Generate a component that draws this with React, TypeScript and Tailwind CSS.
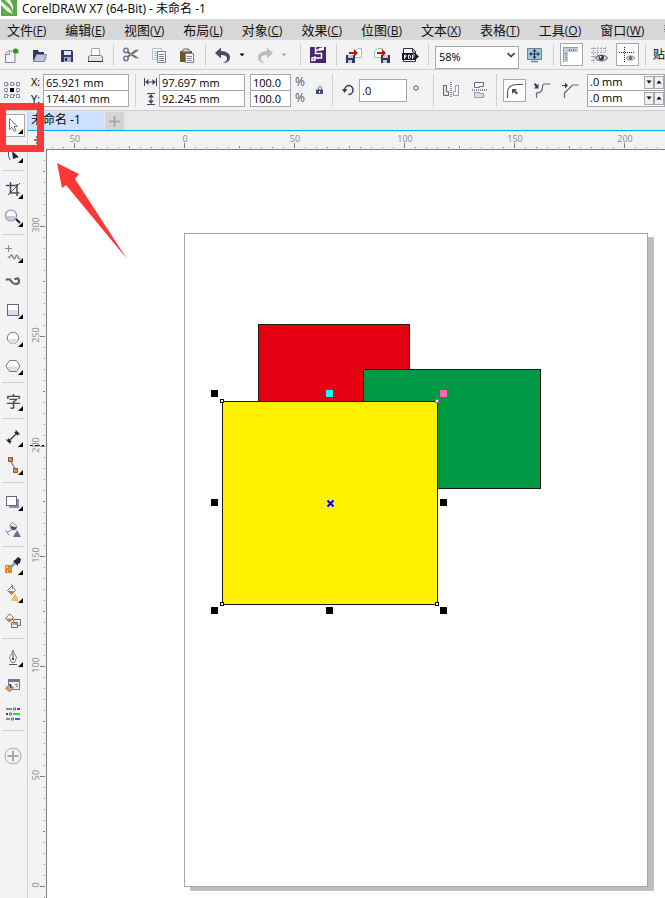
import React, { useEffect, useState } from 'react';

const MENUS = [
  ['文件', 'F'],
  ['编辑', 'E'],
  ['视图', 'V'],
  ['布局', 'L'],
  ['对象', 'C'],
  ['效果', 'C'],
  ['位图', 'B'],
  ['文本', 'X'],
  ['表格', 'T'],
  ['工具', 'O'],
  ['窗口', 'W'],
  ['帮助', 'H'],
];

type Children = { children?: React.ReactNode };

const useWindowSize = () => {
  const [size, setSize] = useState({ width: window.innerWidth, height: window.innerHeight });

  useEffect(() => {
    const update = () => setSize({ width: window.innerWidth, height: window.innerHeight });
    window.addEventListener('resize', update);
    return () => window.removeEventListener('resize', update);
  }, []);

  return size;
};

/* ---------- Small building blocks ---------- */

const Sep = () => <span className="ml-1 mr-[3px] h-[22px] w-px shrink-0 bg-[#d0d0d0]" />;

const BarButton = ({ label, active, children }: Children & { label: string; active?: boolean }) => (
  <button type="button" aria-label={label} className="flex h-7 w-7 shrink-0 items-center justify-center">
    <span
      className={
        active
          ? 'flex h-[23px] w-[23px] items-center justify-center border border-[#a6a8ad] bg-white'
          : 'flex h-[23px] w-[23px] items-center justify-center'
      }
    >
      <svg viewBox="0 0 20 20" className="h-5 w-5 shrink-0" fill="none">
        {children}
      </svg>
    </span>
  </button>
);

const Caret = ({ label, color }: { label: string; color: string }) => (
  <button type="button" aria-label={label} className="flex h-7 w-[14px] shrink-0 items-center pl-[2px]">
    <svg viewBox="0 0 6 4" className="h-1 w-1.5">
      <path d="M0.5 0.5h5L3 3.200z" fill={color} />
    </svg>
  </button>
);

const PropSep = () => <span className="h-[33px] w-px shrink-0 bg-[#d0d0d0]" />;

const Field = ({ label, value, className }: { label: string; value: string; className: string }) => (
  <input
    aria-label={label}
    defaultValue={value}
    className={`border border-[#a6a8ad] bg-white px-[2px] text-[11px] text-black outline-none ${className}`}
  />
);

const Tool = ({ label, flyout, active, children }: Children & { label: string; flyout?: boolean; active?: boolean }) => (
  <button type="button" aria-label={label} className="block h-7 w-[27px] shrink-0">
    <svg viewBox="0 0 27 28" className="h-7 w-[27px]" fill="none">
      {active && <rect x="5.5" y="3.5" width="19" height="22" fill="#fff" stroke="#a6a8ad" />}
      {children}
      {flyout && <path d="M23 18v5h-5z" fill="#000" />}
    </svg>
  </button>
);

const ToolSep = () => <span className="mb-[5px] ml-0.5 mt-[2px] block h-px w-[22px] shrink-0 bg-[#d0d0d0]" />;

/* ---------- Top rows ---------- */

const TitleBar = () => (
  <header className="flex h-[19px] shrink-0 items-start gap-[5px] overflow-hidden bg-white pl-px">
    <svg viewBox="0 0 16 16" className="h-4 w-4 shrink-0">
      <rect width="16" height="16" fill="#5cab46" />
      <path d="M0 1l9 8 3 5-5-2L0 5zM4 0l6 6 2 5V6L9 0z" fill="#fff" />
      <path d="M1 2l11 12M5 0l6 8" stroke="#8bc47c" strokeWidth="0.6" />
    </svg>
    <h1 className="whitespace-nowrap text-xs leading-[17px] text-black">CorelDRAW X7 (64-Bit) - 未命名 -1</h1>
  </header>
);

const MenuBar = () => (
  <nav className="flex h-[21px] shrink-0 items-center gap-[19px] overflow-hidden bg-[#d7d7d7] pl-[7px]">
    {MENUS.map(([name, key]) => (
      <button type="button" key={name} className="shrink-0 whitespace-nowrap text-[13px] leading-5 text-[#111]">
        {name}
        <span className="text-xs">
          (<u>{key}</u>)
        </span>
      </button>
    ))}
  </nav>
);

const StandardBar = () => (
  <div className="flex h-[30px] shrink-0 items-center overflow-hidden border-b border-[#d0d0d0] bg-[#f3f3f3]">
    <div className="-ml-[3px] flex shrink-0 items-center">
      <BarButton label="新建">
        <path d="M4.500 8.500l3-2.500h6.500v11.500H4.500z" fill="#f4f4f8" stroke="#84849a" />
        <path d="M4.500 9.500h4V6.500" stroke="#84849a" />
        <path d="M12 4l2 1 1-2 1 2 2 0-1 2 1 2-2-1-1 1-1-1-2 0 1-2z" fill="#3f9c22" />
        <circle cx="14.5" cy="6" r="2.4" fill="#2f9416" />
      </BarButton>
      <BarButton label="打开">
        <path d="M4 16V5h5l1 2h5v3H8z" fill="#333657" />
        <path d="M4.500 16.500l3-7h10l-2 7z" fill="#c3c6d8" stroke="#7b7e98" />
      </BarButton>
      <BarButton label="保存">
        <path d="M4 5h11l1 1.500V17H4z" fill="#34386a" />
        <path d="M7 6h7v4H7z" fill="#dfe3f2" />
        <path d="M7 12h7v5H7z" fill="#a9aed0" />
        <path d="M8 13h2v3H8z" fill="#22254c" />
      </BarButton>
      <BarButton label="打印">
        <path d="M6.500 3.500h8v8h-8z" fill="#fff" stroke="#86b5ba" />
        <path d="M3.500 11.500l2-1h10l2 1v5h-14z" fill="#e3e4d2" stroke="#77788c" />
        <path d="M6 11.500h9" stroke="#fff" />
        <path d="M3 16.500h15" stroke="#23243a" />
      </BarButton>
      <Sep />
      <BarButton label="剪切">
        <circle cx="5" cy="5.500" r="2.200" stroke="#72728c" strokeWidth="1.500" />
        <circle cx="5" cy="13.500" r="2.200" stroke="#72728c" strokeWidth="1.500" />
        <path d="M7 6.500l10.500 6.500h-3L6.500 8zM7 12.500L17.500 5h-3L6.500 11z" fill="#66665f" stroke="#66665f" strokeWidth="0.400" />
      </BarButton>
      <BarButton label="复制">
        <path d="M3.500 3.500h9v11h-9z" fill="#fff" stroke="#a5c5c7" />
        <path d="M5 6.500h5M5 8.500h3M5 10.500h3M5 12.500h3" stroke="#a5c5c7" />
        <path d="M8.500 6.500h8v11h-8z" fill="#fff" stroke="#7b7e98" />
        <path d="M10 9.500h5M10 11.500h5M10 13.500h5M10 15.500h5" stroke="#7b7e98" />
      </BarButton>
      <BarButton label="粘贴">
        <path d="M3 6h12v11H3z" fill="#6e5434" />
        <path d="M5 7l1.500-3h5L13 7z" fill="#d8d4b8" stroke="#66685f" />
        <path d="M8.500 8.500h8v9h-8z" fill="#f5f7fd" stroke="#7b7e98" />
        <path d="M10 11.500h5M10 13.500h5M10 15.500h5" stroke="#8a8fb4" />
      </BarButton>
      <Sep />
      <BarButton label="撤消">
        <path d="M2 8l6-5.500V6c6 0 9 3 9 6.500S14 18 10 18c3-1 4-3 4-4.500 0-2.500-2.500-3.500-6-3.500v3.500z" fill="#4c4c66" />
      </BarButton>
      <Caret label="撤消列表" color="#000" />
      <BarButton label="重做">
        <path d="M18 8l-6-5.500V6c-6 0-9 3-9 6.500S6 18 10 18c-3-1-4-3-4-4.500 0-2.500 2.500-3.500 6-3.500v3.500z" fill="#bdbdbf" />
      </BarButton>
      <Caret label="重做列表" color="#a5a5a5" />
      <span className="w-[3px] shrink-0" />
      <Sep />
      <BarButton label="搜索内容">
        <path d="M2 2h16v16H2z" fill="#4a2570" />
        <path d="M7.500 2v6.500h6V13H6M13.500 3.500L8 5.500M4 15.500V13l3-1v3z" stroke="#fff" strokeWidth="1.500" />
        <path d="M11 3l5-1v3l-5 1z" fill="#fff" />
      </BarButton>
      <Sep />
      <BarButton label="导入">
        <path d="M10.500 6.500l3-3h4v9h-7z" fill="#fff" stroke="#9cbcbf" />
        <path d="M2 10h9v8H2z" fill="#34375b" />
        <path d="M4 10h5v3H4zM4 15h4v3H4z" fill="#c5cadf" />
        <path d="M5 7h5V4l4 4-4 4V9H5z" fill="#c4180c" />
      </BarButton>
      <BarButton label="导出">
        <path d="M2.500 6.500l3-3h5v9h-8z" fill="#fff" stroke="#9cbcbf" />
        <path d="M9 10h9v8H9z" fill="#34375b" />
        <path d="M11 10h5v3h-5zM11 15h4v3h-4z" fill="#c5cadf" />
        <path d="M5 7h5V4l4 4-4 4V9H5z" fill="#c4180c" />
      </BarButton>
      <BarButton label="发布为 PDF">
        <path d="M3.500 3.500h9l3 3v10h-12z" fill="#fff" stroke="#2d2f45" />
        <path d="M12.500 3v4h3" stroke="#2d2f45" />
        <path d="M2 8h13l4 3.500-4 3.500H2z" fill="#15162c" />
        <path d="M4.500 14v-4h1.500v2H4.500M8.500 10v3.500h1l1-1v-1.500l-1-1zM12.500 14v-4H15M12.500 12h2" stroke="#fff" strokeWidth="0.900" />
      </BarButton>
      <Sep />
      <span className="relative ml-[3px] mr-px block h-[23px] w-[84px] shrink-0">
        <select
          aria-label="缩放级别"
          defaultValue="58%"
          className="h-full w-full appearance-none border border-[#a6a8ad] bg-white pl-[3px] text-[11px] text-black outline-none"
        >
          <option>58%</option>
          <option>100%</option>
          <option>200%</option>
        </select>
        <svg viewBox="0 0 8 6" className="pointer-events-none absolute right-1 top-[9px] h-1.5 w-2" fill="none">
          <path d="M0.500 1L4 4.500 7.500 1" stroke="#444" strokeWidth="1.700" />
        </svg>
      </span>
      <BarButton label="全屏预览">
        <path d="M3.500 3.500h14v11h-14z" fill="#8fcbd9" stroke="#7a7d92" />
        <path d="M7 16.500h7" stroke="#7a7d92" strokeWidth="1.500" />
        <path d="M10.500 5v8M6 9h9" stroke="#26284d" />
        <path d="M10.500 4l2 2.500h-4zM10.500 14l2-2.500h-4zM5 9l2.500-2v4zM16 9l-2.500-2v4z" fill="#26284d" />
      </BarButton>
      <span className="w-px shrink-0" />
      <Sep />
      <BarButton label="显示标尺" active>
        <path d="M2 2h15v5H7v10H2z" fill="#c3cad9" />
        <path d="M2 2h15v1H3v14H2z" fill="#949db3" />
        <path d="M8.500 4v2M10.500 5v1M12.500 4v2M14.500 5v1M4 8.500h2M5 10.500h1M4 12.500h2M5 14.500h1" stroke="#6f7892" />
      </BarButton>
      <BarButton label="显示网格">
        <path d="M2 3.500h15M2 7.500h15M2 11.500h6M2 15.500h4M4.500 2v16M8.500 2v9M12.500 2v6M16.500 2v6" stroke="#a6a9be" strokeDasharray="2 1" />
        <path d="M6.500 13C9.500 9 15.500 9 18.500 13c-3 4-9 4-12 0z" fill="#e8e8ec" stroke="#77777f" strokeWidth="1.200" />
        <circle cx="12.300" cy="12.800" r="2.800" fill="#3f3f4c" />
        <circle cx="11.600" cy="12" r="0.900" fill="#fff" />
      </BarButton>
      <BarButton label="显示辅助线" active>
        <path d="M2 7.500h16M7.500 2v15" stroke="#22243c" strokeDasharray="1 1" />
        <path d="M9 13c2.500-3 6.500-3 9 0-2.500 3-6.500 3-9 0z" fill="#e8e8ec" stroke="#9a9aa4" />
        <circle cx="13.500" cy="13" r="2" fill="#6c6c78" />
      </BarButton>
      <Sep />
      <button type="button" className="ml-1 whitespace-nowrap text-xs text-black">
        贴齐
      </button>
    </div>
  </div>
);

const Spinner = ({ label, className }: { label: string; className: string }) => (
  <div className={`flex h-[17px] items-center border border-[#a6a8ad] bg-white ${className}`}>
    <input aria-label={label} defaultValue=".0 mm" className="w-14 bg-transparent pl-[2px] text-[11px] text-black outline-none" />
    <button type="button" aria-label={`${label}减小`} className="flex h-[13px] w-[10px] items-center justify-center border border-[#a6a8ad] bg-[#f0f0f0]">
      <svg viewBox="0 0 6 4" className="h-1 w-1.5 shrink-0">
        <path d="M0.500 0.500h5L3 3.500z" />
      </svg>
    </button>
    <button type="button" aria-label={`${label}增大`} className="flex h-[13px] w-[10px] items-center justify-center border border-[#a6a8ad] bg-[#f0f0f0]">
      <svg viewBox="0 0 6 4" className="h-1 w-1.5 shrink-0">
        <path d="M0.500 3.500h5L3 0.500z" />
      </svg>
    </button>
  </div>
);

const PropertyBar = () => (
  <div className="flex h-[41px] shrink-0 items-center overflow-hidden border-b border-[#d0d0d0] bg-[#f3f3f3] pl-1 text-[11px]">
    <button type="button" aria-label="对象原点" className="shrink-0">
      <svg viewBox="0 0 16 16" className="h-4 w-4" fill="none">
        <path d="M2 2.500h12M2 13.500h12M2.500 2v12M13.500 2v12" stroke="#8888a0" strokeDasharray="1 1" />
        <path
          d="M.5.500h3v3h-3zM6.500.500h3v3h-3zM12.500.500h3v3h-3zM.5 6.500h3v3h-3zM12.500 6.500h3v3h-3zM.5 12.500h3v3h-3zM6.500 12.500h3v3h-3zM12.500 12.500h3v3h-3z"
          fill="#f3f3f3"
          stroke="#8a8aa0"
        />
        <path d="M6 6h4v4H6z" fill="#000" />
      </svg>
    </button>
    <div className="ml-[11px] grid shrink-0 grid-cols-[12px_86px] leading-4">
      <span>X:</span>
      <Field label="X" value="65.921 mm" className="h-[17px]" />
      <span>Y:</span>
      <Field label="Y" value="174.401 mm" className="-mt-px h-[17px]" />
    </div>
    <span className="w-1.5 shrink-0" />
    <PropSep />
    <div className="ml-2 grid shrink-0 grid-cols-[15px_86px] items-center">
      <svg viewBox="0 0 13 10" className="h-2.5 w-[13px]" fill="none">
        <path d="M.5 1v8M12.500 1v8M2 5h9" stroke="#44455c" />
        <path d="M1 5l3.500-3v6zM12 5L8.500 2v6z" fill="#44455c" />
      </svg>
      <Field label="对象宽度" value="97.697 mm" className="h-[17px]" />
      <svg viewBox="0 0 13 12" className="h-3 w-[13px]" fill="none">
        <path d="M3 .5h8M3 11.500h8M7 2v8" stroke="#44455c" />
        <path d="M7 1l3 3.500H4zM7 11l3-3.500H4z" fill="#44455c" />
      </svg>
      <Field label="对象高度" value="92.245 mm" className="-mt-px h-[17px]" />
    </div>
    <div className="ml-[5px] flex w-[41px] shrink-0 flex-col">
      <Field label="水平缩放" value="100.0" className="h-[17px]" />
      <Field label="垂直缩放" value="100.0" className="-mt-px h-[17px]" />
    </div>
    <div className="ml-1 w-5 shrink-0 text-xs leading-4 text-[#555566]">
      <p>%</p>
      <p>%</p>
    </div>
    <button type="button" aria-label="锁定比率" className="shrink-0">
      <svg viewBox="0 0 9 10" className="h-2.5 w-[9px]" fill="none">
        <path d="M3.500 5V3Q3.500 1.500 5 1.500T6.500 3V5" stroke="#77778c" />
        <path d="M1 4.500h7V9H1z" fill="#4a4b6c" />
        <path d="M4 6h1v2H4z" fill="#fff" />
      </svg>
    </button>
    <span className="w-2 shrink-0" />
    <PropSep />
    <div className="ml-[9px] flex shrink-0 items-center">
      <svg viewBox="0 0 12 12" className="h-3 w-3" fill="none">
        <path d="M2.500 6.500C2.500 3 5 1.500 7 1.500S11 3.500 11 6s-2 4.500-4.500 4.500" stroke="#3b3c54" strokeWidth="1.500" />
        <path d="M0 5h5.500L2.500 9z" fill="#3b3c54" />
      </svg>
      <Field label="旋转角度" value=".0" className="ml-[5px] h-[23px] w-[48px]" />
      <svg viewBox="0 0 6 6" className="mb-1 ml-1.5 h-1.5 w-1.5" fill="none">
        <circle cx="3" cy="3" r="2.200" stroke="#555566" />
      </svg>
    </div>
    <span className="w-[14px] shrink-0" />
    <PropSep />
    <div className="ml-[9px] flex shrink-0 gap-[13px]">
      <button type="button" aria-label="水平镜像">
        <svg viewBox="0 0 16 16" className="h-4 w-4" fill="none">
          <path d="M.5 3.500h3v6h2v4h-5z" fill="#e0e0e8" stroke="#66667e" />
          <path d="M15.500 3.500h-3v6h-2v4h5z" fill="#f8f8fa" stroke="#9a9aac" />
          <path d="M8 0v16" stroke="#22233c" strokeDasharray="1 1" />
        </svg>
      </button>
      <button type="button" aria-label="垂直镜像">
        <svg viewBox="0 0 16 16" className="h-4 w-4" fill="none">
          <path d="M2.500.500h9v4h-4v1h-5z" fill="#f8f8fa" stroke="#66667e" />
          <path d="M2.500 15.500h9v-4h-4v-1h-5z" fill="#e0e0e8" stroke="#9a9aac" />
          <path d="M0 8h16" stroke="#22233c" strokeDasharray="1 1" />
        </svg>
      </button>
    </div>
    <span className="w-2 shrink-0" />
    <PropSep />
    <button type="button" aria-label="圆角" className="ml-1.5 flex h-[23px] w-[23px] shrink-0 items-center justify-center border border-[#a6a8ad] bg-white">
      <svg viewBox="0 0 19 19" className="h-[19px] w-[19px]" fill="none">
        <path d="M2.500 17v-5Q2.500 3.500 12 3.500h6" stroke="#55566c" strokeWidth="1.200" />
        <path d="M7 8h5l-1.500 1.500 2.500 2.500-1.500 1.500-2.500-2.500L7 13z" fill="#4b4c64" />
      </svg>
    </button>
    <button type="button" aria-label="扇形角" className="ml-[7px] shrink-0">
      <svg viewBox="0 0 18 18" className="h-[18px] w-[18px]" fill="none">
        <path d="M3.500 17v-5q6 0 6-6 0-3 2-3h6" stroke="#66677c" strokeWidth="1.200" />
        <path d="M1 3l1-1 2.500 2 1-1.500V7.500H1l1.500-1.500z" fill="#3b3c54" />
      </svg>
    </button>
    <button type="button" aria-label="倒棱角" className="ml-2.5 shrink-0">
      <svg viewBox="0 0 18 18" className="h-[18px] w-[18px]" fill="none">
        <path d="M3.500 17v-5l8-8h6" stroke="#66677c" strokeWidth="1.200" />
        <path d="M1 4h3V1.500L7 4.500l-3 3V5H1z" fill="#3b3c54" />
      </svg>
    </button>
    <div className="ml-2 flex shrink-0 flex-col">
      <Spinner label="左侧圆角半径" className="" />
      <Spinner label="右侧圆角半径" className="-mt-px" />
    </div>
  </div>
);

/* ---------- Toolbox ---------- */

const Toolbox = () => (
  <aside className="flex w-7 shrink-0 flex-col border-r border-[#d0d0d0] bg-[#f3f3f3]">
    <Tool label="选择工具" active flyout>
      <path d="M9.500 7.500v11l2.500-2.200 2 4.200 2-1-2-4h3.300z" fill="#fff" stroke="#77778c" />
    </Tool>
    <span className="h-px shrink-0" />
    <Tool label="形状工具" flyout>
      <path d="M8.500 11v4q0 3 2 5" stroke="#55566c" />
      <path d="M7 9h4v3H7z" fill="#77788c" />
      <path d="M12 11l7 6-6 2z" fill="#22233c" />
    </Tool>
    <ToolSep />
    <Tool label="裁剪工具" flyout>
      <path d="M6 9.500h11V20M10.500 6v11h9M17 8v3" stroke="#4b4c64" strokeWidth="1.500" />
      <path d="M8 19L20 7" stroke="#4b4c64" />
    </Tool>
    <Tool label="缩放工具" flyout>
      <path d="M16 15l4 4" stroke="#22233c" strokeWidth="2.200" />
      <circle cx="11" cy="11.500" r="5.500" fill="#fff" stroke="#88889c" strokeWidth="1.200" />
      <path d="M6.500 12h9a4.500 4.500 0 01-9 0z" fill="#c9cbdd" />
    </Tool>
    <ToolSep />
    <Tool label="手绘工具" flyout>
      <path d="M8.500 5v7M5 8.500h7" stroke="#8a8a9e" />
      <path d="M8 16.500q1.500 2 2.500-.5t2.500 1 2.500 0 2.500 0 2 1" stroke="#88899e" strokeWidth="1.500" />
    </Tool>
    <Tool label="艺术笔工具">
      <path d="M6 12q3-2 5 1t5 3 3-3-2-2.500-2.500 1" stroke="#5c5c70" strokeWidth="2.200" />
      <path d="M6 10.500h5" stroke="#9999ac" />
    </Tool>
    <Tool label="矩形工具" flyout>
      <rect x="7.500" y="8.500" width="11" height="11" fill="#fff" stroke="#66677c" />
      <path d="M8 14h10v5H8z" fill="#dcdde9" />
    </Tool>
    <Tool label="椭圆形工具" flyout>
      <circle cx="13" cy="14" r="5.700" fill="#fff" stroke="#77778c" />
      <path d="M8 15h10a5 5 0 01-10 0z" fill="#dcdde9" />
    </Tool>
    <Tool label="多边形工具" flyout>
      <path d="M9.500 8.500h7l3.500 5.500-3.500 5.500h-7L6 14z" fill="#fff" stroke="#77778c" />
      <path d="M7 14.500h12L16.200 19H9.800z" fill="#dcdde9" />
    </Tool>
    <ToolSep />
    <button type="button" aria-label="文本工具" className="relative flex h-7 w-[27px] shrink-0 items-center justify-center pb-0.5 text-[15px] font-medium leading-5 text-[#4c4c62]">
      字
      <svg viewBox="0 0 5 5" className="absolute bottom-[5px] right-1 h-[5px] w-[5px]">
        <path d="M5 0v5H0z" />
      </svg>
    </button>
    <ToolSep />
    <Tool label="平行度量工具" flyout>
      <path d="M9 17l8-8M6.500 15.500l4 4M15.500 6.500l4 4" stroke="#33344c" strokeWidth="1.200" />
      <path d="M8 18v-4l4 4zM18 8v4l-4-4z" fill="#22233c" />
    </Tool>
    <Tool label="直线连接器" flyout>
      <path d="M11 10l5 8" stroke="#77778c" strokeWidth="1.200" />
      <rect x="8.500" y="5.500" width="4" height="4" fill="#f98a10" stroke="#8a5a55" />
      <rect x="13.500" y="16.500" width="4" height="4" fill="#f98a10" stroke="#8a5a55" />
    </Tool>
    <ToolSep />
    <Tool label="阴影工具" flyout>
      <path d="M9 11h10v9H9z" fill="#8c8eaa" />
      <rect x="6.500" y="8.500" width="10" height="9" fill="#fff" stroke="#66677c" />
    </Tool>
    <Tool label="透明度工具">
      <path d="M12.500 6.500l4.500 4q-1 3.500-4 3.500t-3-5zM11 14l-4 2.500M6 14.500l3 5" fill="#eef0f6" stroke="#88889c" />
      <path d="M10.500 10l6.500 1.500q-1.500 2.500-3.500 2.500t-3-4z" fill="#3b4c6e" />
      <path d="M17 14l4 7h-8z" fill="#66708e" />
    </Tool>
    <ToolSep />
    <Tool label="颜色滴管工具" flyout>
      <path d="M5 13h7v8H5z" fill="#ef7f0e" />
      <path d="M6 14h2v2H6zM9 16h2v2H9zM7 18h1v2H7z" fill="#ffc56b" />
      <path d="M9 17l6-6" stroke="#8b9cb4" strokeWidth="2.500" />
      <path d="M13 9l2-1 3-3 3 2-1 4-2 1v2z" fill="#22233c" />
    </Tool>
    <Tool label="交互式填充工具" flyout>
      <path d="M7.500 10.500l4-4 4 3.500-4 4.500z" fill="#fff" stroke="#66677c" />
      <path d="M8 11h6.500l-3 3z" fill="#e07818" />
      <path d="M11 5q2-1 1.500 4" stroke="#66677c" />
      <path d="M15 13l4 8h-8z" fill="#f4bf5e" />
    </Tool>
    <Tool label="智能填充工具">
      <path d="M12 11.500h8.500v6H17M11.500 14.500h6v5h-6z" stroke="#5a6888" />
      <path d="M5.500 10.500l4-4.500 4 3.500-4 4.500z" fill="#fff" stroke="#66677c" />
      <path d="M6 10.500h7l-3.500 3.500z" fill="#e07818" />
      <path d="M13.500 11v5h4" stroke="#e07818" strokeWidth="1.300" />
    </Tool>
    <ToolSep />
    <Tool label="轮廓笔" flyout>
      <path d="M13 6q-1 4-3.500 7.500l2 5h3l2-5Q14 10 13 6z" fill="#fff" stroke="#77778c" />
      <path d="M13 9v5M9 20.500h8" stroke="#4b4c64" />
      <path d="M12 14h2v2h-2z" fill="#4b4c64" />
    </Tool>
    <Tool label="编辑填充">
      <rect x="8.500" y="7.500" width="11" height="10" fill="#eff0f6" stroke="#77788c" />
      <path d="M8 7h12v3H8z" fill="#77788c" />
      <path d="M15 12.500h3M16 14.500h2" stroke="#77788c" />
      <path d="M5.500 16.500l4.500-4.500 3.500 4-4 3.500z" fill="#e8a05a" stroke="#77788c" />
      <path d="M10 12l1 4" stroke="#22233c" />
    </Tool>
    <Tool label="颜色样式">
      <path d="M6 9h6M6 19h4" stroke="#66667e" strokeWidth="1.500" />
      <path d="M17 9h3" stroke="#e01010" strokeWidth="2" />
      <path d="M6 14h2" stroke="#3b3c54" strokeWidth="2" />
      <path d="M13 14h7" stroke="#20e020" strokeWidth="2" />
      <path d="M15 19h5" stroke="#3060f0" strokeWidth="2" />
      <path d="M13.500 8h2v2h-2zM9.500 13h2v2h-2zM11.500 18h2v2h-2z" fill="#fff" stroke="#66677c" />
    </Tool>
    <ToolSep />
    <span className="h-1.5 shrink-0" />
    <Tool label="快速自定义">
      <circle cx="13" cy="14" r="8" stroke="#a8a8a8" />
      <path d="M13 8.500v11M7.500 14h11" stroke="#a8a8a8" strokeWidth="2" />
    </Tool>
  </aside>
);

/* ---------- Rulers ---------- */

// 50 mm take 110 px on both rulers, so a small tick falls every 11 px
const TICK = 11;

const HorizontalRuler = () => {
  const { width } = useWindowSize();
  const count = Math.ceil((width - 184) / TICK) + 12;
  const ticks = Array.from({ length: count }, (_, i) => i - 12);
  return (
    <svg className="h-full min-w-0 flex-1" fill="#808080">
      {ticks.map((i) => {
        const height = i % 10 === 0 ? 5 : i % 5 === 0 ? 2 : 1;
        return <rect key={i} x={138 + i * TICK} y={height === 5 ? 12 : 17 - height} width="1" height={height} />;
      })}
      {ticks
        .filter((i) => i % 10 === 0)
        .map((i) => (
          <text key={i} x={139 + i * TICK} y="11" textAnchor="middle" fontSize="9" fill="#888">
            {Math.abs(i * 5)}
          </text>
        ))}
    </svg>
  );
};

const VerticalRuler = () => {
  const { height } = useWindowSize();
  const count = Math.ceil((height - 886) / TICK) + 67;
  const ticks = Array.from({ length: Math.max(count, 67) }, (_, i) => 66 - i);
  return (
    <svg className="w-[18px] shrink-0" fill="#808080">
      {ticks.map((i) => {
        const width = i % 10 === 0 ? 5 : i % 5 === 0 ? 2 : 1;
        return <rect key={i} x={width === 5 ? 12 : 17 - width} y={736 - i * TICK} width={width} height="1" />;
      })}
      <path d="M2 295.500h3M7 295.500h5M14 295.500h2" stroke="#000" />
      {ticks
        .filter((i) => i % 10 === 0)
        .map((i) => (
          <text key={i} transform={`translate(11 ${735 - i * TICK}) rotate(-90)`} textAnchor="middle" fontSize="9" fill="#888">
            {Math.abs(i * 5)}
          </text>
        ))}
    </svg>
  );
};

/* ---------- Drawing window ---------- */

const HANDLES = [
  [164, 240, '#000'],
  [279, 240, '#1ef5f5'],
  [393, 240, '#ff66bb'],
  [164, 349, '#000'],
  [393, 349, '#000'],
  [164, 457, '#000'],
  [279, 457, '#000'],
  [393, 457, '#000'],
] as const;

const Drawing = () => (
  <svg className="block h-[748px] w-full" fill="none">
    {/* Page and its shadow */}
    <rect x="143" y="87" width="464" height="654" fill="#bfbfbf" />
    <rect x="137.500" y="83.500" width="463" height="653" fill="#fff" stroke="#a6a6a6" />

    <g stroke="#231815">
      <rect x="211.500" y="174.500" width="151" height="120" fill="#e60012" />
      <rect x="316.500" y="219.500" width="177" height="119" fill="#009944" />
      <rect x="175.500" y="251.500" width="215" height="203" fill="#fff100" />
    </g>

    {/* Selection */}
    {HANDLES.map(([x, y, color]) => (
      <rect key={`${x}-${y}`} x={x} y={y} width="7" height="7" fill={color} />
    ))}
    <g fill="#fff" stroke="#000">
      <rect x="173.500" y="249.500" width="3" height="3" />
      <rect x="388.500" y="249.500" width="3" height="3" stroke="#d05fa0" />
      <rect x="173.500" y="452.500" width="3" height="3" />
      <rect x="388.500" y="452.500" width="3" height="3" />
    </g>
    <path d="M280.500 350.500l6 6M286.500 350.500l-6 6" stroke="#0000ff" strokeWidth="2" />
  </svg>
);

const DocumentWindow = () => (
  <main className="flex min-w-0 flex-1 flex-col">
    <div className="flex h-[19px] shrink-0 items-end gap-px bg-[#e8e8e8]">
      <button type="button" className="h-[18px] w-[76px] bg-[#cce0ff] pb-0.5 pl-[3px] text-left text-xs leading-4 text-black">
        未命名 -1
      </button>
      <button type="button" aria-label="新建文档" className="flex h-[18px] w-[19px] items-center justify-center bg-[#d4d4d4]">
        <svg viewBox="0 0 11 11" className="h-[11px] w-[11px]">
          <path d="M5.500 0v11M0 5.500h11" stroke="#a8a8a8" strokeWidth="2" />
        </svg>
      </button>
    </div>
    <div className="flex h-5 shrink-0 border-t border-[#00a8f3] bg-[#f3f3f3]">
      <svg className="w-[18px] shrink-0" fill="none">
        <path d="M6 9h6M9 5v9" stroke="#000" strokeDasharray="2 1" />
      </svg>
      <HorizontalRuler />
    </div>
    <div className="flex flex-1 bg-[#f3f3f3]">
      <VerticalRuler />
      <div className="-mt-px min-w-0 flex-1 border-l border-t border-[#808080] bg-white">
        <Drawing />
      </div>
    </div>
  </main>
);

/* Red frame and arrow that point at the pick tool */
const PickToolHint = () => (
  <div className="pointer-events-none absolute left-0 top-[103px]">
    <div className="-ml-px h-[49px] w-[45px] border-[7px] border-[#ff3737]" />
    <svg viewBox="0 0 72 98" className="ml-14 mt-[10px] h-[98px] w-[72px]">
      <path d="M1 1l22 11-4 5 52 80L10 23l-4 3z" fill="#ff3737" />
    </svg>
  </div>
);

export default function App() {
  return (
    <div className="relative flex min-h-screen w-full flex-col overflow-hidden bg-[#f3f3f3] font-['Open_Sans','Noto_Sans_CJK_SC',sans-serif]">
      <TitleBar />
      <MenuBar />
      <StandardBar />
      <PropertyBar />
      <div className="flex flex-1">
        <Toolbox />
        <DocumentWindow />
      </div>
      <PickToolHint />
    </div>
  );
}
